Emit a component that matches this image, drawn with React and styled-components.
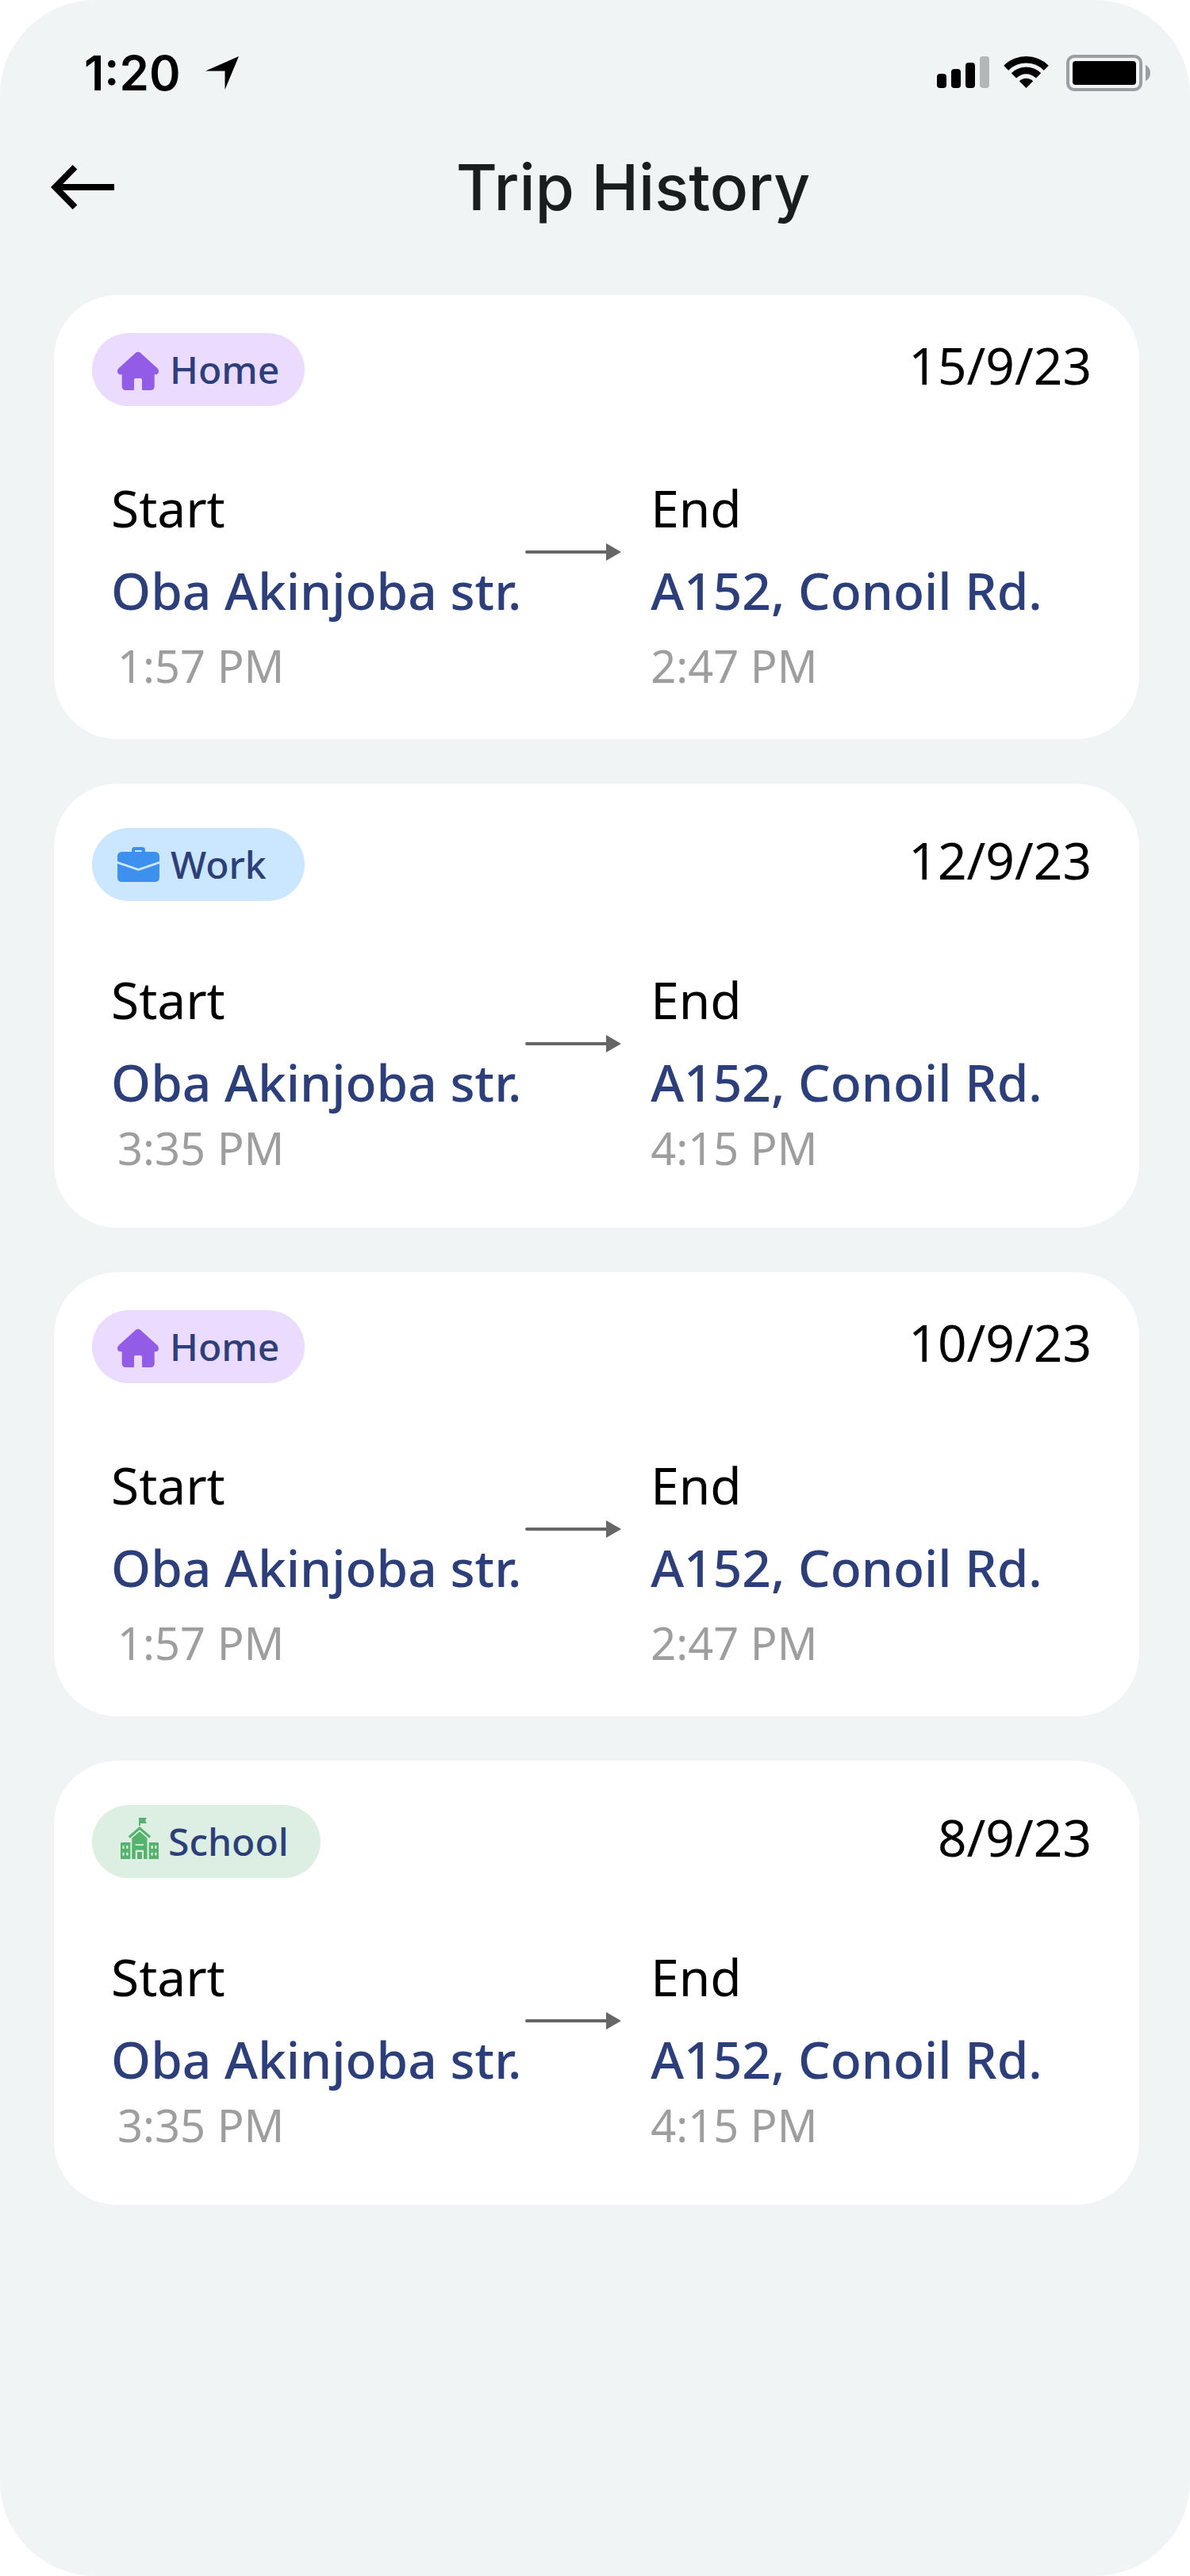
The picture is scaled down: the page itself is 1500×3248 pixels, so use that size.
import React from "react";
import styled, { createGlobalStyle } from "styled-components";

const GlobalStyle = createGlobalStyle`
  *, *::before, *::after { box-sizing: border-box; }
  body { margin: 0; background: #ffffff; }
  h1, p, ul, time { margin: 0; padding: 0; }
  svg { display: block; flex: none; }
`;

const text = `"Noto Sans", "Open Sans", sans-serif`;
const display = `Inter, "Liberation Sans", sans-serif`;

const Screen = styled.div`
  display: flex;
  flex-direction: column;
  min-height: 100vh;
  padding-top: 56px;
  background: #f0f4f5;
  border-radius: 120px;
  font-family: ${text};
`;

const StatusBar = styled.div`
  display: flex;
  align-items: center;
  justify-content: space-between;
  padding: 0 50px 0 106px;
`;

const StatusGroup = styled.div`
  display: flex;
  align-items: center;
  gap: ${(p) => p.$gap}px;
`;

const Clock = styled.time`
  font: 600 60px/72px ${display};
  color: #000000;
`;

const Header = styled.header`
  display: flex;
  align-items: center;
  margin-top: 60px;
  padding: 0 48px 0 64px;
`;

const BackButton = styled.button`
  padding: 0;
  border: 0;
  background: none;
  color: #000000;
  cursor: pointer;
`;

const Title = styled.h1`
  flex: 1;
  font: 500 80px/96px ${display};
  color: #1a1d1e;
  text-align: center;
`;

const TripList = styled.ul`
  display: flex;
  flex-direction: column;
  gap: 56px;
  margin: 88px 64px 80px 68px;
  list-style: none;
`;

const Card = styled.li`
  padding: ${(p) => (p.$compact ? "56px 60px 65px 48px" : "48px 60px 57px 48px")};
  border-radius: 80px;
  background: #ffffff;
`;

const CardTop = styled.div`
  display: flex;
  align-items: flex-start;
  justify-content: space-between;
`;

const Badge = styled.span`
  display: flex;
  align-items: center;
  gap: ${(p) => p.$gap}px;
  min-width: ${(p) => p.$width}px;
  height: 92px;
  padding: 0 32px;
  border-radius: 46px;
  background: ${(p) => p.$tint};
  color: #2c3f7b;
  font-size: 48px;
  font-weight: 500;
  line-height: 64px;
`;

const TripDate = styled.time`
  color: #000000;
  font-size: 64px;
  line-height: 82px;
`;

const Route = styled.div`
  display: grid;
  grid-template-columns: minmax(0, 15fr) 122px minmax(0, 17fr);
  margin-top: ${(p) => (p.$compact ? 85 : 89)}px;
  padding-left: 24px;
`;

const Stop = styled.div`
  padding-left: ${(p) => (p.$end ? 36 : 0)}px;
  white-space: nowrap;
`;

const StopLabel = styled.p`
  color: #000000;
  font-size: 64px;
  line-height: 80px;
`;

const Address = styled.p`
  margin-top: 24px;
  color: #2c3f7b;
  font-size: 64px;
  font-weight: 500;
  line-height: 80px;
`;

const StopTime = styled.p`
  margin-top: ${(p) => (p.$compact ? 6 : 18)}px;
  padding-left: ${(p) => (p.$indent ? 8 : 0)}px;
  color: #9e9e9e;
  font-size: 56px;
  line-height: 72px;
`;

const RouteArrow = styled.svg`
  margin-top: 83px;
`;

const LocationIcon = () => (
  <svg width="42" height="42" viewBox="0 0 42 42" aria-hidden="true">
    <path d="M42 0 24.500 42V18.500H0Z" fill="#000" />
  </svg>
);

const SignalIcon = () => (
  <svg width="66" height="46" viewBox="0 0 66 46" aria-hidden="true">
    <rect x="0" y="24" width="12" height="18" rx="4" />
    <rect x="18" y="18" width="12" height="24" rx="4" />
    <rect x="36" y="10" width="12" height="32" rx="4" />
    <rect x="54" y="2" width="12" height="40" rx="4" fill="#b3b7b8" />
  </svg>
);

const WifiIcon = () => (
  <svg width="57" height="46" viewBox="0 0 57 46" aria-hidden="true">
    <path d="M.2 13.700A40 40 0 0 1 56.800 13.700L50.800 19.700A31.500 31.500 0 0 0 6.200 19.700Z" />
    <path d="M9.800 23.300A26.500 26.500 0 0 1 47.200 23.300L41 29.500A17.700 17.700 0 0 0 16 29.500Z" />
    <path d="M19.800 33.300A12.300 12.300 0 0 1 37.200 33.300L28.500 42Z" />
  </svg>
);

const BatteryIcon = () => (
  <svg width="110" height="46" viewBox="-4 0 110 46" aria-hidden="true">
    <rect x="2" y="2" width="92" height="42" rx="8" fill="none" stroke="#9c9fa1" strokeWidth="4" />
    <rect x="8" y="8" width="80" height="30" rx="4" />
    <path d="M100 13C104 15 106 19 106 23S104 31 100 33Z" fill="#9c9fa1" />
  </svg>
);

const BackIcon = () => (
  <svg width="80" height="56" viewBox="0 0 80 56" fill="none" stroke="currentColor" strokeWidth="8" aria-hidden="true">
    <path d="M30.500 2.800 5.600 28 30.500 53.200M6 28H80" />
  </svg>
);

const HomeIcon = () => (
  <svg width="52" height="60" viewBox="0 0 52 60" fill="#935ce6" aria-hidden="true">
    <path d="M22.800 9C24.800 7.200 27.200 7.200 29.200 9L50.600 28.600C53.400 31.400 51.800 36.300 48 36.300H46.700V51Q46.700 56 41.700 56H32Q31 56 31 55V43Q31 41 29 41H23Q21 41 21 43V55Q21 56 20 56H10.700Q5.700 56 5.700 51V36.300H4C.2 36.300-1.400 31.400 1.400 28.600Z" />
  </svg>
);

const WorkIcon = () => (
  <svg width="53" height="60" viewBox="0 0 53 60" fill="#3e90ee" aria-hidden="true">
    <path fillRule="evenodd" d="M18 14V12Q18 8 22 8H31Q35 8 35 12V14H47Q53 14 53 20V26L26.500 35 0 26V20Q0 14 6 14ZM22 12V14H30.500V12Z" />
    <path d="M0 29 26.500 38 53 29V46Q53 52 47 52H6Q0 52 0 46Z" />
  </svg>
);

const SchoolIcon = () => (
  <svg width="52" height="60" viewBox="0 0 52 60" fill="#55b36e" aria-hidden="true">
    <path d="M27 0H36.700L35.300 3.500 36.700 7H29V10H27Z" />
    <path d="M14.800 24.500 28 13 41.200 24.500" fill="none" stroke="#55b36e" strokeWidth="3" />
    <path fillRule="evenodd" d="M18.300 25.500 28 17.300 37.500 25.500V52H33V40.700H22.700V52H18.300ZM22.700 33.300V35H33V33.300Z" />
    <path d="M25 43H31V52H25Z" />
    <path
      fillRule="evenodd"
      d="M5 31H16.300V52H4V32ZM6.500 35V39H8.500V35ZM11.200 35V39H13.500V35ZM6.500 43.700V47.500H8.500V43.700ZM11.200 43.700V47.500H13.500V43.700Z"
    />
    <path
      fillRule="evenodd"
      d="M39.700 31H51L52 32V52H39.700ZM42.500 35V39H44.800V35ZM47.300 35V39H49.400V35ZM42.500 43.700V47.500H44.800V43.700ZM47.300 43.700V47.500H49.400V43.700Z"
    />
  </svg>
);

const places = {
  home: { name: "Home", Icon: HomeIcon, tint: "#eadbff", width: 268, gap: 14 },
  work: { name: "Work", Icon: WorkIcon, tint: "#cbe6ff", width: 268, gap: 14 },
  school: { name: "School", Icon: SchoolIcon, tint: "#ddeee2", width: 288, gap: 12 },
};

const trips = [
  { place: "home", date: "15/9/23", start: "1:57 PM", end: "2:47 PM", compact: false },
  { place: "work", date: "12/9/23", start: "3:35 PM", end: "4:15 PM", compact: true },
  { place: "home", date: "10/9/23", start: "1:57 PM", end: "2:47 PM", compact: false },
  { place: "school", date: "8/9/23", start: "3:35 PM", end: "4:15 PM", compact: true },
];

function TripCard({ trip }) {
  const { name, Icon, tint, width, gap } = places[trip.place];
  return (
    <Card $compact={trip.compact}>
      <CardTop>
        <Badge $tint={tint} $width={width} $gap={gap}>
          <Icon />
          {name}
        </Badge>
        <TripDate>{trip.date}</TripDate>
      </CardTop>
      <Route $compact={trip.compact}>
        <Stop>
          <StopLabel>Start</StopLabel>
          <Address>Oba Akinjoba str.</Address>
          <StopTime $compact={trip.compact} $indent>{trip.start}</StopTime>
        </Stop>
        <RouteArrow width="122" height="24" viewBox="0 0 122 24" aria-hidden="true">
          <path d="M2 12H104" stroke="#666666" strokeWidth="4" strokeLinecap="round" />
          <path d="M102 1 121 12 102 23Z" fill="#666666" />
        </RouteArrow>
        <Stop $end>
          <StopLabel>End</StopLabel>
          <Address>A152, Conoil Rd.</Address>
          <StopTime $compact={trip.compact}>{trip.end}</StopTime>
        </Stop>
      </Route>
    </Card>
  );
}

export default function App() {
  return (
    <>
      <GlobalStyle />
      <Screen>
        <StatusBar>
          <StatusGroup $gap={32}>
            <Clock>1:20</Clock>
            <LocationIcon />
          </StatusGroup>
          <StatusGroup $gap={18}>
            <SignalIcon />
            <WifiIcon />
            <BatteryIcon />
          </StatusGroup>
        </StatusBar>
        <Header>
          <BackButton type="button" aria-label="Back">
            <BackIcon />
          </BackButton>
          <Title>Trip History</Title>
        </Header>
        <main>
          <TripList>
            {trips.map((trip) => (
              <TripCard key={trip.date} trip={trip} />
            ))}
          </TripList>
        </main>
      </Screen>
    </>
  );
}
